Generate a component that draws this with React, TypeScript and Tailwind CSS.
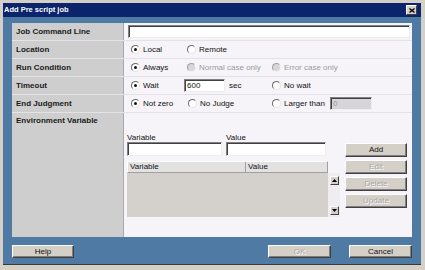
import React from "react";

const font = "font-['Liberation_Sans',Arial,sans-serif]";

function Radio({ checked = false, disabled = false }: { checked?: boolean; disabled?: boolean }) {
  return (
    <span
      className={
        disabled
          ? "relative inline-block w-[9px] h-[9px] shrink-0 rounded-full border border-t-[#a0a0a0] border-l-[#a0a0a0] border-r-[#f0f0f0] border-b-[#f0f0f0] bg-[#d8d6da]"
          : "relative inline-block w-[9px] h-[9px] shrink-0 rounded-full border border-t-[#6a6a6a] border-l-[#6a6a6a] border-r-[#e6e6e6] border-b-[#e6e6e6] bg-white"
      }
    >
      {checked && <span className="absolute left-[2px] top-[2px] w-[3px] h-[3px] rounded-full bg-[#111]" />}
    </span>
  );
}

function Opt({
  label,
  checked = false,
  disabled = false,
  w,
}: {
  label: string;
  checked?: boolean;
  disabled?: boolean;
  w?: string;
}) {
  return (
    <div className={`flex items-center gap-[3px] ${w ?? ""}`}>
      <Radio checked={checked} disabled={disabled} />
      <span className={disabled ? "text-[8px] text-[#9a9a9a]" : "text-[8px] text-[#111]"}>{label}</span>
    </div>
  );
}

function Btn({ label, disabled = false, w = "w-[62px]", h = "h-[14px]" }: { label: string; disabled?: boolean; w?: string; h?: string }) {
  return (
    <div
      className={`${w} ${h} bg-[#d4d0c8] border border-t-white border-l-white border-r-[#404040] border-b-[#404040] shadow-[inset_-1px_-1px_0_#808080] flex items-center justify-center text-[8px] ${
        disabled ? "text-[#a6a6a6] [text-shadow:1px_1px_0_#ffffff]" : "text-[#111]"
      }`}
    >
      {label}
    </div>
  );
}

function Field({ w, h = "h-[13px]", value = "", disabled = false }: { w: string; h?: string; value?: string; disabled?: boolean }) {
  return (
    <div
      className={`${w} ${h} border border-t-[#808080] border-l-[#808080] border-r-[#eeeeee] border-b-[#eeeeee] shadow-[inset_1px_1px_0_#404040] ${
        disabled ? "bg-[#d6d4d8] text-[#9a9a9a]" : "bg-white text-[#111]"
      } flex items-center pl-[2px] text-[8px]`}
    >
      {value}
    </div>
  );
}

function Row({ label, children, h = "h-[17px]" }: { label: string; children?: React.ReactNode; h?: string }) {
  return (
    <div className={`flex ${h}`}>
      <div className="w-[111px] bg-[#cecece] flex items-center pl-[4px] text-[8px] font-bold text-[#1a1a1a]">{label}</div>
      <div className="flex-1 bg-[#f6f4f8] border-l border-[#a9a9a9] flex items-center pl-[7px]">{children}</div>
    </div>
  );
}

function Arrow({ up }: { up: boolean }) {
  return (
    <div className="w-[9px] h-[9px] bg-[#d4d0c8] border border-t-white border-l-white border-r-[#404040] border-b-[#404040] flex items-center justify-center">
      <svg width="5" height="3" viewBox="0 0 5 3">
        {up ? <polygon points="0,3 5,3 2.5,0" fill="#000" /> : <polygon points="0,0 5,0 2.5,3" fill="#000" />}
      </svg>
    </div>
  );
}

export default function App() {
  return (
    <div className={`w-[425px] h-[270px] bg-[#d4d0c8] pl-[3px] pr-[4px] pt-[3px] pb-[5px] ${font}`}>
      <div className="h-full flex flex-col bg-[#4f7aa4] border-b border-[#3a3a3a]">
        {/* Title bar */}
        <div className="h-[14px] bg-[#0b246b] flex items-center justify-between pl-[1px] pr-[4px]">
          <span className="text-white font-bold text-[7.5px]">Add Pre script job</span>
          <div className="w-[11px] h-[10px] bg-[#d4d0c8] border border-t-white border-l-white border-r-[#404040] border-b-[#404040] flex items-center justify-center">
            <svg width="6" height="5" viewBox="0 0 6 5">
              <path d="M0.5 0.5 L5.5 4.5 M5.5 0.5 L0.5 4.5" stroke="#000" strokeWidth="1.3" />
            </svg>
          </div>
        </div>

        {/* Body */}
        <div className="flex-1 px-[9px] pt-[6px] flex flex-col">
          <div className="h-[214px] bg-[#e4e2e6] flex flex-col gap-px">
            <Row label="Job Command Line">
              <div className="-ml-[3px]">
                <Field w="w-[282px]" />
              </div>
            </Row>
            <Row label="Location">
              <Opt label="Local" checked w="w-[56px]" />
              <Opt label="Remote" />
            </Row>
            <Row label="Run Condition">
              <Opt label="Always" checked w="w-[56px]" />
              <Opt label="Normal case only" disabled w="w-[85px]" />
              <Opt label="Error case only" disabled />
            </Row>
            <Row label="Timeout">
              <Opt label="Wait" checked w="w-[53px]" />
              <Field w="w-[41px]" value="600" />
              <span className="ml-[4px] w-[43px] text-[8px] text-[#111]">sec</span>
              <Opt label="No wait" />
            </Row>
            <Row label="End Judgment">
              <Opt label="Not zero" checked w="w-[57px]" />
              <Opt label="No Judge" w="w-[84px]" />
              <Opt label="Larger than" w="w-[58px]" />
              <Field w="w-[42px]" value="0" disabled />
            </Row>
            {/* Environment Variable */}
            <div className="flex flex-1">
              <div className="w-[111px] bg-[#cecece] pl-[4px] pt-[3px] text-[8px] font-bold text-[#1a1a1a] leading-[10px]">
                Environment Variable
              </div>
              <div className="flex-1 bg-[#f6f4f8] border-l border-[#a9a9a9] flex pl-[3px] pt-[20px]">
                <div className="w-[213px] flex flex-col">
                  <div className="flex">
                    <div className="w-[99px] flex flex-col">
                      <span className="h-[9px] leading-[9px] text-[8px] text-[#111]">Variable</span>
                      <Field w="w-[95px]" h="h-[14px]" />
                    </div>
                    <div className="flex flex-col">
                      <span className="h-[9px] leading-[9px] text-[8px] text-[#111]">Value</span>
                      <Field w="w-[100px]" h="h-[14px]" />
                    </div>
                  </div>
                  <div className="mt-[5px] flex">
                    <div className="w-[201px] flex flex-col">
                      <div className="h-[12px] flex bg-[#e2e2e2] border border-t-white border-l-white border-b-[#a0a0a0] border-r-[#a0a0a0] text-[8px] text-[#111]">
                        <div className="w-[118px] border-r border-[#a0a0a0] pl-[2px] flex items-center">Variable</div>
                        <div className="flex-1 pl-[2px] flex items-center">Value</div>
                      </div>
                      <div className="h-[44px] bg-[#d4d1cc]" />
                    </div>
                    <div className="w-[12px] mt-[12px] h-[44px] bg-[#efedf1] flex flex-col items-center justify-between pt-[3px] pb-[2px] pl-[1px]">
                      <Arrow up />
                      <Arrow up={false} />
                    </div>
                  </div>
                </div>
                <div className="ml-[5px] pt-[10px] flex flex-col gap-[3px]">
                  <Btn label="Add" />
                  <Btn label="Edit" disabled />
                  <Btn label="Delete" disabled />
                  <Btn label="Update" disabled />
                </div>
              </div>
            </div>
          </div>

          {/* Bottom buttons */}
          <div className="mt-[8px] flex items-center justify-between">
            <Btn label="Help" h="h-[13px]" />
            <div className="flex gap-[18px]">
              <Btn label="OK" disabled w="w-[63px]" h="h-[13px]" />
              <Btn label="Cancel" w="w-[63px]" h="h-[13px]" />
            </div>
          </div>
        </div>
      </div>
    </div>
  );
}
